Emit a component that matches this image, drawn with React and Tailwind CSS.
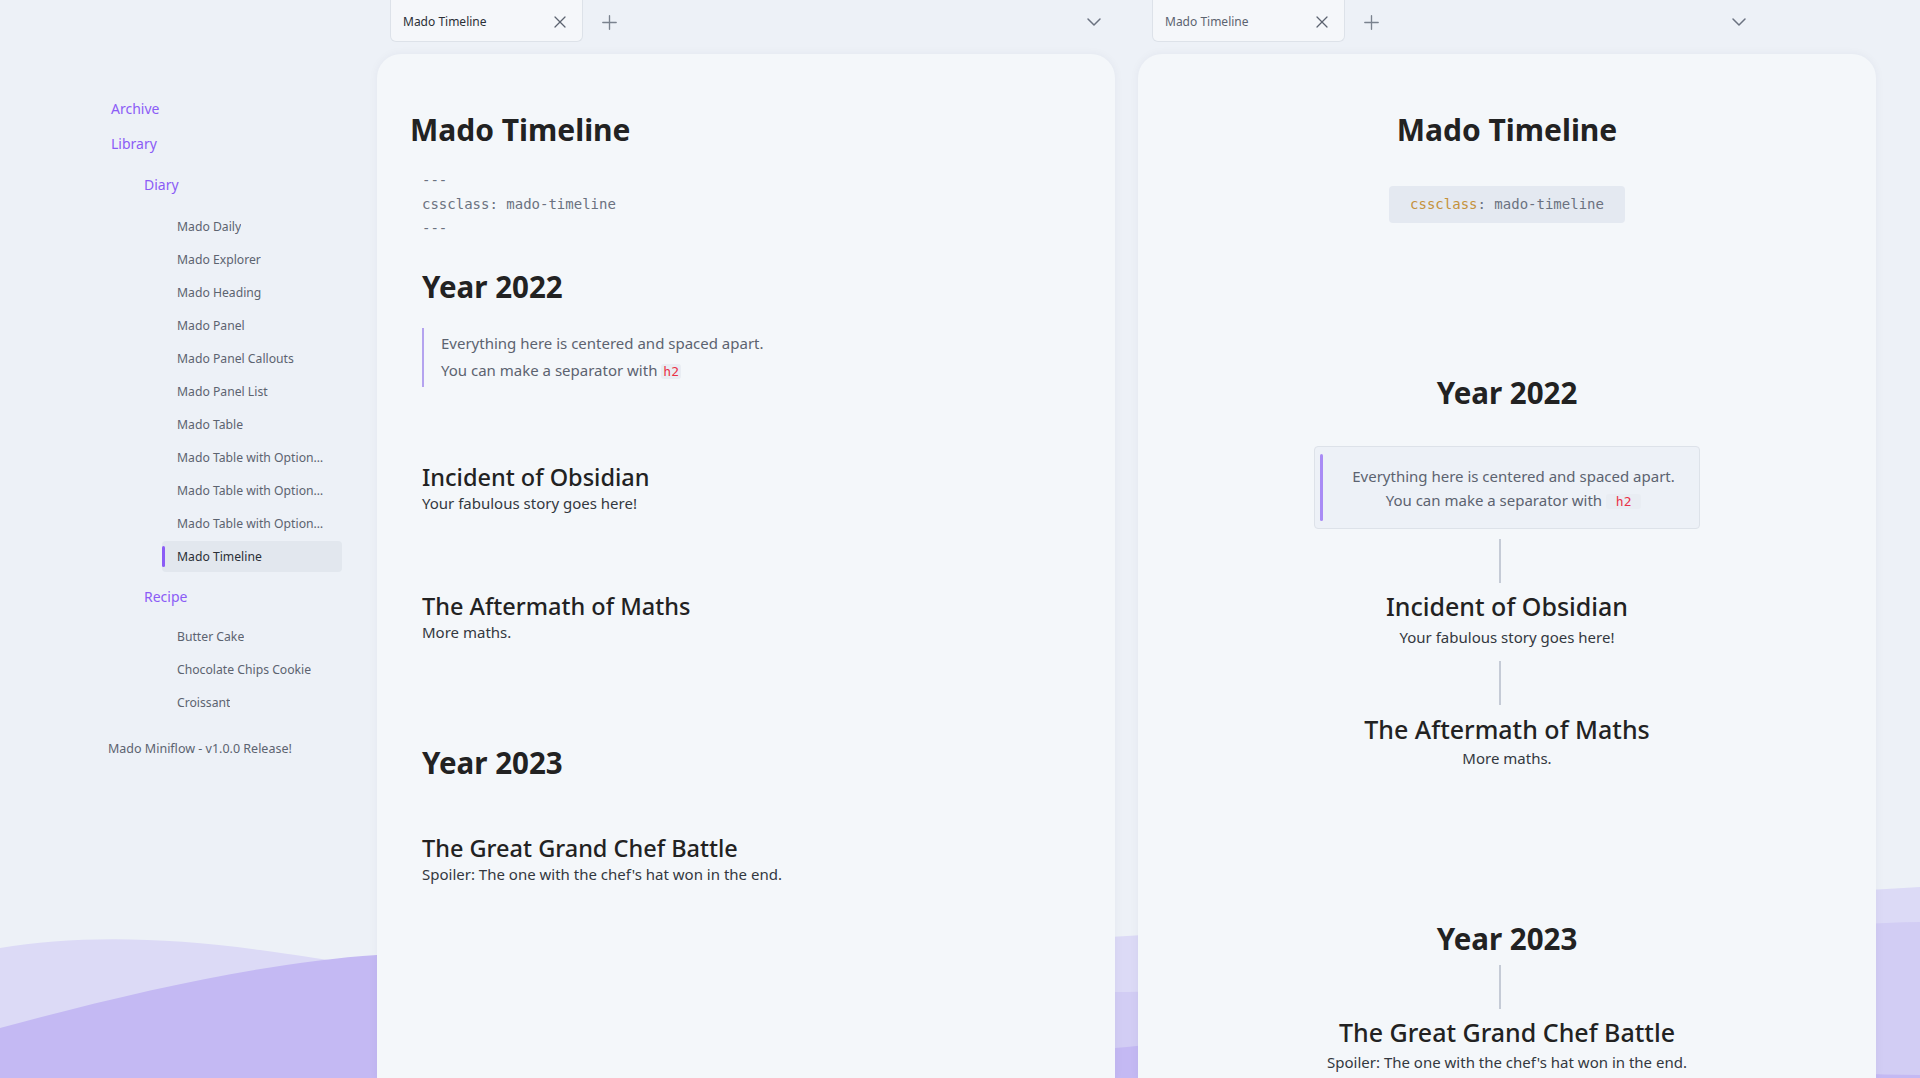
import { X, Plus, ChevronDown } from "lucide-react";

const diary = [
  "Mado Daily",
  "Mado Explorer",
  "Mado Heading",
  "Mado Panel",
  "Mado Panel Callouts",
  "Mado Panel List",
  "Mado Table",
  "Mado Table with Option…",
  "Mado Table with Option…",
  "Mado Table with Option…",
  "Mado Timeline",
];

const recipes = ["Butter Cake", "Chocolate Chips Cookie", "Croissant"];

function Waves() {
  return (
    <svg className="absolute inset-0" width="1920" height="1078" viewBox="0 0 1920 1078">
      <path
        d="M0,948 C70,936 160,936 260,950 C330,960 360,965 377,968 C700,1000 950,945 1127,936 C1400,920 1700,900 1920,887 L1920,1078 L0,1078 Z"
        fill="#dcdaf6"
      />
      <path
        d="M377,1060 C700,1060 950,990 1127,992 C1400,990 1700,925 1920,922 L1920,1078 L377,1078 Z"
        fill="#d2cdf4"
      />
      <path
        d="M0,1028 C140,990 270,962 377,955 C600,945 800,1080 1127,1047 C1500,1010 1700,1075 1920,1075 L1920,1078 L0,1078 Z"
        fill="#c4b9f3"
      />
    </svg>
  );
}

function NavItem({ label, active }) {
  return (
    <div className="flex h-[33px] items-center">
      <div
        className={`relative flex h-[31px] w-full items-center rounded-[4px] pl-[15px] pr-[18px] ${
          active ? "bg-[#e2e7ee] text-[#2b2f36]" : "text-[#5c6370]"
        }`}
      >
        {active && <span className="absolute left-0 top-[5px] h-[21px] w-[3px] rounded-full bg-[#8b5cf6]" />}
        <span className="truncate text-[12.2px] leading-[20px]">{label}</span>
      </div>
    </div>
  );
}

function Sidebar() {
  return (
    <aside className="w-[377px] shrink-0 pt-[99px]">
      <div className="ml-[111px] text-[14px] leading-[20px] text-[#8b5cf6]">Archive</div>
      <div className="ml-[111px] mt-[15px] text-[14px] leading-[20px] text-[#8b5cf6]">Library</div>
      <div className="ml-[144px] mt-[21px] text-[14px] leading-[20px] text-[#8b5cf6]">Diary</div>
      <div className="ml-[162px] mt-[15px] w-[180px]">
        {diary.map((d, i) => (
          <NavItem key={i} label={d} active={d === "Mado Timeline"} />
        ))}
      </div>
      <div className="ml-[144px] mt-[14px] text-[14px] leading-[20px] text-[#8b5cf6]">Recipe</div>
      <div className="ml-[162px] mt-[13.5px] w-[180px]">
        {recipes.map((r) => (
          <NavItem key={r} label={r} />
        ))}
      </div>
      <div className="ml-[108px] mt-[19.5px] text-[12.5px] leading-[20px] text-[#5c6370]">
        Mado Miniflow - v1.0.0 Release!
      </div>
    </aside>
  );
}

function TabHeader({ active, tabMl, chevMr }) {
  return (
    <div className="flex h-[54px] shrink-0 items-start">
      <div
        className={`flex h-[42px] w-[193px] items-center rounded-b-[6px] border border-t-0 border-[#dde2e9] bg-[#f5f7fa] pl-[12px] pr-[12px] pt-[2px] ${tabMl}`}
      >
        <span className={`flex-1 text-[12px] ${active ? "text-[#2b2f36]" : "text-[#5c6370]"}`}>Mado Timeline</span>
        <X size={20} strokeWidth={1.5} className="text-[#5c6370]" />
      </div>
      <div className="ml-[15px] flex h-[44px] items-center">
        <Plus size={23} strokeWidth={1.4} className="text-[#7a828e]" />
      </div>
      <div className="flex-1" />
      <div className={`flex h-[44px] items-center ${chevMr}`}>
        <ChevronDown size={24} strokeWidth={1.5} className="text-[#6b7280]" />
      </div>
    </div>
  );
}

function InlineCode({ children }) {
  return (
    <code className="rounded-[3px] bg-[#e9edf3] px-[2px] font-['DejaVu_Sans_Mono',monospace] text-[13px] text-[#e93147]">
      {children}
    </code>
  );
}

function LeftPane() {
  return (
    <div className="flex w-[738px] shrink-0 flex-col">
      <TabHeader active tabMl="ml-[13px]" chevMr="mr-[9px]" />
      <div className="flex-1 rounded-t-[24px] bg-[#f4f7fa] pt-[56px] shadow-[0_0_10px_rgba(30,40,80,0.05)]">
        <h1 className="pl-[33px] text-[30px] font-bold leading-[40px] text-[#222222]">Mado Timeline</h1>
        <div className="mt-[18px] pl-[45px] font-['DejaVu_Sans_Mono',monospace] text-[14px] leading-[24px] text-[#6b7280]">
          <div>---</div>
          <div>cssclass: mado-timeline</div>
          <div>---</div>
        </div>
        <div className="pl-[45px]">
          <h2 className="mt-[29px] text-[29.5px] font-bold leading-[36px] text-[#222222]">Year 2022</h2>
          <blockquote className="mt-[23px] border-l-2 border-[#b4a3ef] py-[2px] pl-[17px] text-[15px] leading-[27px] text-[#5c6370]">
            <div>Everything here is centered and spaced apart.</div>
            <div>
              You can make a separator with <InlineCode>h2</InlineCode>
            </div>
          </blockquote>
          <h3 className="mt-[75px] text-[23.5px] font-medium leading-[30px] text-[#222222]">Incident of Obsidian</h3>
          <p className="text-[15px] leading-[22px] text-[#333840]">Your fabulous story goes here!</p>
          <h3 className="mt-[77px] text-[23.5px] font-medium leading-[30px] text-[#222222]">The Aftermath of Maths</h3>
          <p className="text-[15px] leading-[22px] text-[#333840]">More maths.</p>
          <h2 className="mt-[102px] text-[29.5px] font-bold leading-[36px] text-[#222222]">Year 2023</h2>
          <h3 className="mt-[52px] text-[23.5px] font-medium leading-[30px] text-[#222222]">The Great Grand Chef Battle</h3>
          <p className="text-[15px] leading-[22px] text-[#333840]">Spoiler: The one with the chef's hat won in the end.</p>
        </div>
      </div>
    </div>
  );
}

function Connector({ mt }) {
  return <div className={`mr-[14px] h-[44px] w-[2px] bg-[#c5cbd6] ${mt}`} />;
}

function RightPane() {
  return (
    <div className="flex w-[738px] shrink-0 flex-col">
      <TabHeader tabMl="ml-[14px]" chevMr="mr-[125px]" />
      <div className="flex flex-1 flex-col items-center rounded-t-[24px] bg-[#f4f7fa] pt-[56px] text-center shadow-[0_0_10px_rgba(30,40,80,0.05)]">
        <h1 className="text-[30px] font-bold leading-[40px] text-[#222222]">Mado Timeline</h1>
        <div className="mt-[36px] flex h-[37px] items-center rounded-[4px] bg-[#e4e9f1] px-[21px] font-['DejaVu_Sans_Mono',monospace] text-[14px] text-[#6b7280]">
          <span className="text-[#c4923b]">cssclass</span>: mado-timeline
        </div>
        <h2 className="mt-[152px] text-[29.5px] font-bold leading-[36px] text-[#222222]">Year 2022</h2>
        <div className="relative mt-[35px] h-[83px] w-[386px] rounded-[4px] border border-[#dde2e9] bg-[#edf1f7] pl-[13px] pt-[17px] text-[15px] leading-[24px] text-[#5c6370]">
          <span className="absolute left-[5px] top-[7px] bottom-[7px] w-[3px] rounded-full bg-[#a98bf5]" />
          <div>Everything here is centered and spaced apart.</div>
          <div>
            You can make a separator with <InlineCode>&nbsp;h2&nbsp;</InlineCode>
          </div>
        </div>
        <Connector mt="mt-[10px]" />
        <h3 className="mt-[8px] text-[25px] font-medium leading-[30px] text-[#222222]">Incident of Obsidian</h3>
        <p className="mt-[5px] text-[15px] leading-[22px] text-[#333840]">Your fabulous story goes here!</p>
        <Connector mt="mt-[13px]" />
        <h3 className="mt-[9px] text-[25px] font-medium leading-[30px] text-[#222222]">The Aftermath of Maths</h3>
        <p className="mt-[3px] text-[15px] leading-[22px] text-[#333840]">More maths.</p>
        <h2 className="mt-[152px] text-[29.5px] font-bold leading-[36px] text-[#222222]">Year 2023</h2>
        <Connector mt="mt-[8px]" />
        <h3 className="mt-[8px] text-[25px] font-medium leading-[30px] text-[#222222]">The Great Grand Chef Battle</h3>
        <p className="mt-[4px] text-[15px] leading-[22px] text-[#333840]">Spoiler: The one with the chef's hat won in the end.</p>
      </div>
    </div>
  );
}

export default function App() {
  return (
    <div className="relative h-[1078px] w-[1920px] overflow-hidden bg-[#edf1f7] font-['Noto_Sans',sans-serif]">
      <Waves />
      <div className="relative flex h-full">
        <Sidebar />
        <div className="flex h-full gap-[23px] pr-[44px]">
          <LeftPane />
          <RightPane />
        </div>
      </div>
    </div>
  );
}
